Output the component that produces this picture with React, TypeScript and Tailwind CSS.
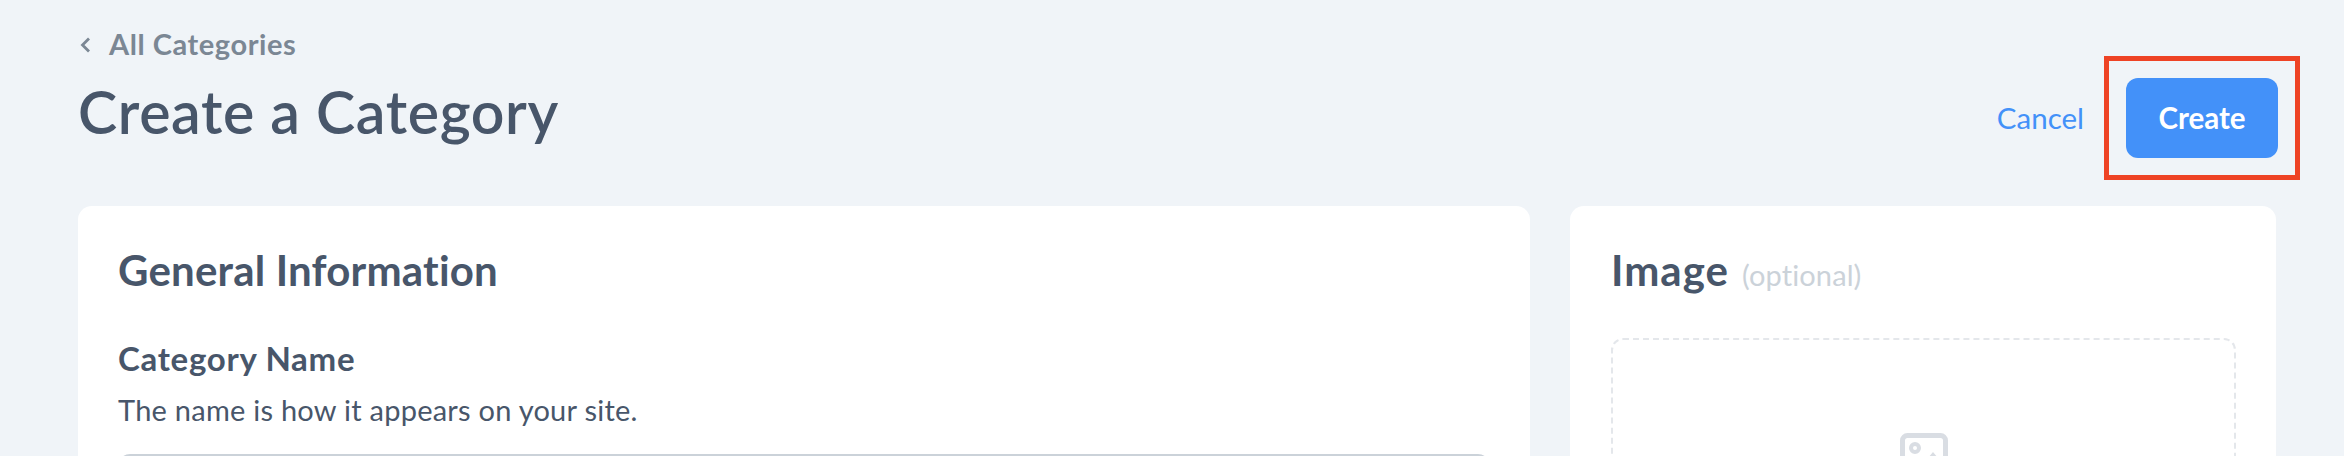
function ImageIcon() {
  return (
    <svg width="48" height="42" viewBox="0 0 48 42" fill="none" className="block">
      <rect x="2.5" y="2.5" width="43" height="37" rx="5" stroke="#d9dde3" strokeWidth="5" />
      <circle cx="15" cy="15" r="4" stroke="#d9dde3" strokeWidth="4" />
      <path d="M24 30l9-11 10 12v6H6v-4l8-6 6 5z" fill="#d9dde3" />
    </svg>
  );
}

export default function App() {
  return (
    <div className="h-[456px] overflow-hidden bg-[#f0f4f8] pl-[78px] pr-[68px] font-['Lato',sans-serif] text-[#48566a]">
      <div className="flex h-[206px] items-start justify-between">
        <div>
          <a className="mt-[26px] flex h-[36px] items-center gap-[18px] text-[29px] tracking-[0.55px] font-bold text-[#7b8794]">
            <svg width="12" height="16" viewBox="0 0 12 16" fill="none" className="mt-[2px] ml-[1px]">
              <path d="M10 1.5L3.5 8l6.5 6.5" stroke="#7b8794" strokeWidth="2.8" />
            </svg>
            All Categories
          </a>
          <h1 className="mt-[15px] text-[59px] leading-[70px] tracking-[0.65px] font-semibold">Create a Category</h1>
        </div>
        <div className="-mr-[24px] mt-[56px] flex items-center gap-[20px]">
          <a className="text-[29.5px] text-[#4391f9]">Cancel</a>
          <div className="border-[5px] border-[#ee4325] p-[17px]">
            <button className="h-[80px] w-[152px] rounded-[12px] bg-[#4391f9] text-[29.5px] font-bold text-white">Create</button>
          </div>
        </div>
      </div>
      <div className="flex gap-[40px]">
        <section className="h-[300px] flex-1 rounded-[14px] bg-white px-[40px] pt-[40px]">
          <h2 className="text-[42px] leading-[48px] tracking-[0.2px] font-bold">General Information</h2>
          <h3 className="mt-[44px] text-[33px] leading-[40px] tracking-[0.7px] font-bold">Category Name</h3>
          <p className="mt-[14px] text-[29px] leading-[36px] tracking-[0.25px]">The name is how it appears on your site.</p>
          <div className="mt-[26px] h-[60px] rounded-[12px] border-2 border-[#cbd2d9]" />
        </section>
        <section className="h-[300px] w-[706px] rounded-[14px] bg-white pr-[40px] pl-[41px] pt-[40px]">
          <h2 className="text-[42px] leading-[48px] tracking-[1px] font-bold">
            Image <span className="ml-[2px] text-[29px] leading-none tracking-[0.1px] font-normal text-[#cbd2d9]">(optional)</span>
          </h2>
          <div className="mt-[44px] flex h-[200px] justify-center rounded-[12px] border-2 border-dashed border-[#e4e7eb] pt-[93px]">
            <ImageIcon />
          </div>
        </section>
      </div>
    </div>
  );
}
